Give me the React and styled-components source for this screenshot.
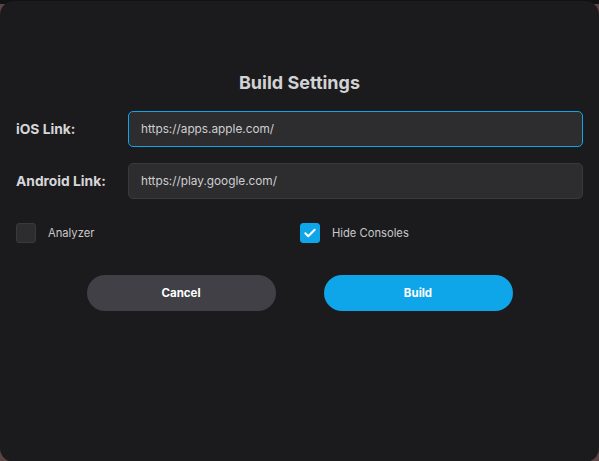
import styled, { createGlobalStyle } from "styled-components";

const GlobalStyle = createGlobalStyle`
  html, body {
    margin: 0;
    padding: 0;
    height: 100%;
    background: linear-gradient(#121214 0 4px, #5a4343 4px);
    font-family: Inter, "Liberation Sans", sans-serif;
  }
  #root {
    height: 100%;
  }
`;

const Modal = styled.div`
  box-sizing: border-box;
  height: 461px;
  margin-top: 1px;
  background: #1b1b1d;
  border-radius: 14px;
  padding: 71px 16px 0;
  display: flex;
  flex-direction: column;
`;

const Title = styled.h2`
  margin: 0 0 18px;
  text-align: center;
  font-size: 18px;
  font-weight: 700;
  color: #d2d2d4;
`;

const Field = styled.div`
  display: grid;
  grid-template-columns: 112px 1fr;
  align-items: center;
  margin-bottom: 16px;
`;

const Label = styled.label`
  font-size: 13.8px;
  font-weight: 700;
  color: #d6d6d8;
`;

const Input = styled.input`
  box-sizing: border-box;
  height: 36px;
  padding: 0 12px;
  background: #2d2d2f;
  border: 1px solid ${(p) => (p.$focused ? "#0ea5e9" : "#3a3a3d")};
  border-radius: 5px;
  color: #cfcfd1;
  font-family: inherit;
  font-size: 11.8px;
  outline: none;
`;

const Checks = styled.div`
  display: grid;
  grid-template-columns: 284px 1fr;
  margin-top: 8px;
`;

const CheckRow = styled.label`
  display: flex;
  align-items: center;
  gap: 12px;
  font-size: 11.2px;
  color: #c8c8ca;
`;

const Box = styled.span`
  box-sizing: border-box;
  width: 20px;
  height: 20px;
  border-radius: 3px;
  display: flex;
  align-items: center;
  justify-content: center;
  background: ${(p) => (p.$checked ? "#0ea5e9" : "#2d2d2f")};
  border: 1px solid ${(p) => (p.$checked ? "#0ea5e9" : "#3a3a3d")};
`;

const Buttons = styled.div`
  display: flex;
  justify-content: center;
  gap: 48px;
  margin-top: 32px;
`;

const Button = styled.button`
  width: 189px;
  height: 36px;
  border: none;
  border-radius: 18px;
  background: ${(p) => (p.$primary ? "#0ea5e9" : "#404046")};
  color: #ffffff;
  font-family: inherit;
  font-size: 11.5px;
  font-weight: 700;
`;

function Checkbox({ checked, label }) {
  return (
    <CheckRow>
      <Box $checked={checked}>
        {checked && (
          <svg width="14" height="14" viewBox="0 0 24 24" fill="none">
            <path
              d="M4 12.5l5 5L20 6.5"
              stroke="#fff"
              strokeWidth="3.5"
              strokeLinecap="round"
              strokeLinejoin="round"
            />
          </svg>
        )}
      </Box>
      {label}
    </CheckRow>
  );
}

export default function App() {
  return (
    <>
      <GlobalStyle />
      <Modal>
        <Title>Build Settings</Title>
        <Field>
          <Label>iOS Link:</Label>
          <Input $focused defaultValue="https://apps.apple.com/" />
        </Field>
        <Field>
          <Label>Android Link:</Label>
          <Input defaultValue="https://play.google.com/" />
        </Field>
        <Checks>
          <Checkbox label="Analyzer" />
          <Checkbox checked label="Hide Consoles" />
        </Checks>
        <Buttons>
          <Button>Cancel</Button>
          <Button $primary>Build</Button>
        </Buttons>
      </Modal>
    </>
  );
}
